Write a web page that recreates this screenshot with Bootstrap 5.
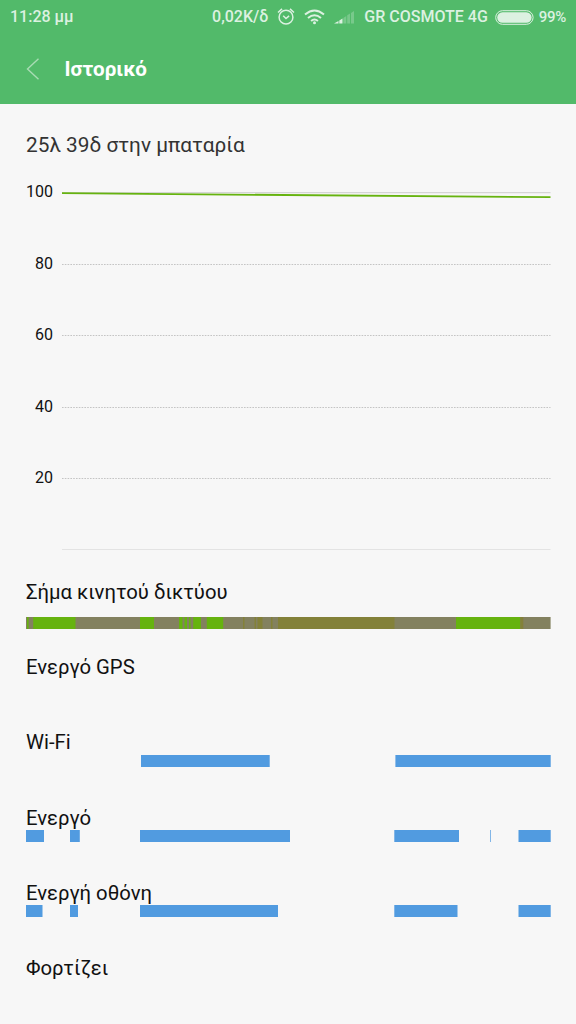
<!DOCTYPE html>
<html lang="el">
<head>
<meta charset="utf-8">
<meta name="viewport" content="width=device-width, initial-scale=1">
<title>Ιστορικό</title>
<link href="https://cdn.jsdelivr.net/npm/bootstrap@5.3.0/dist/css/bootstrap.min.css" rel="stylesheet">
<style>
body{font-family:Roboto,sans-serif;background:#f7f7f7;color:#111;overflow:hidden}
svg{display:block;flex:none}
.top-area{background:#52ba6a;height:104px}
.status{height:34px;padding:0 10px;color:#dcf1e1;font-size:16px;font-weight:500;line-height:34px;white-space:nowrap}
.status .percent{font-size:15px;margin-left:5px;letter-spacing:-.3px}
.title-bar{height:70px;padding-left:26px}
.title-bar h1{font-size:20.6px;font-weight:700;color:#fff;margin:0 0 0 24.500px;line-height:70px}
.content{padding:0 25px 0 26px}
.summary{font-size:20.8px;line-height:24px;margin:0;padding-top:29px;color:#333;white-space:nowrap}
.chart{height:391px;margin-top:10px}
.axis{width:27px;font-size:16px;line-height:20px;text-align:right;padding-top:15px;color:#111}
.axis span{display:block;height:71.500px}
.tracks{padding-top:22px}
.track{height:75.2px}
.track h2{font-size:20.3px;line-height:24px;font-weight:400;margin:0;color:#111;height:24.6px;white-space:nowrap}
.track .spaced{height:36.8px}
</style>
</head>
<body>
<header class="top-area">
  <div class="status d-flex align-items-center">
    <span>11:28 μμ</span>
    <span class="ms-auto">0,02K/δ</span>
    <svg width="18" height="18" viewBox="0 0 18 18" style="margin-left:9px" fill="none" stroke="#dcf1e1" stroke-width="1.500"><circle cx="9" cy="9.200" r="6.900"/><path d="M6.200 7.700 9 10.500l3.100-2.600M1 4.500 5 .9M17 4.500 13 .9"/></svg>
    <svg width="21" height="16" viewBox="0 0 21 16" style="margin-left:9px" fill="none" stroke="#dcf1e1" stroke-width="2"><path d="M1 5.500Q10.500-2.500 20 5.500M4 9Q10.500 3.500 17 9M7.100 12Q10.500 9 13.900 12"/><circle cx="10.500" cy="13.800" r="1.500" fill="#dcf1e1" stroke="none"/></svg>
    <svg width="21" height="14" viewBox="0 0 21 14" style="margin-left:9px"><path fill="#dcf1e1" d="M0 13.500 4.500 11V13.500zM5.300 10.500 8.500 8.500V13.500H5.300z"/><path fill="#78c98b" d="M9.300 8 12.300 6V13.500H9.300zM13.200 5.300 16 3.500V13.500H13.200zM17 3 20 1V13.500H17z"/></svg>
    <span style="margin-left:9px">GR COSMOTE 4G</span>
    <svg width="39" height="15" viewBox="0 0 39 15" style="margin-left:7px"><rect x=".7" y=".7" width="37.400" height="13.600" rx="6.800" fill="none" stroke="#dcf1e1" stroke-width="1"/><rect x="2.200" y="2.200" width="34.400" height="10.600" rx="5.300" fill="#dcf1e1"/></svg>
    <span class="percent">99%</span>
  </div>
  <div class="title-bar d-flex align-items-center">
    <svg width="14" height="22" viewBox="0 0 14 22" fill="none" stroke="#a8dcb4" stroke-width="1.400"><path d="M12.500 .8 1.500 11 12.500 21.200"/></svg>
    <h1>Ιστορικό</h1>
  </div>
</header>
<main class="content">
  <p class="summary">25λ 39δ στην μπαταρία</p>
  <section class="chart d-flex">
    <div class="axis"><span>100</span><span>80</span><span>60</span><span>40</span><span>20</span></div>
    <svg class="ms-auto" width="489" height="391" viewBox="62 167 489 391">
      <path d="M62 192.700H550.500" stroke="#d5d5d5" stroke-width="1.300"/>
      <path d="M62 264.500H550.500M62 335.500H550.500M62 407.500H550.500M62 478.500H550.500" stroke="#c4c4c4" stroke-dasharray="1.600 1.200"/>
      <path d="M62 549.500H550.500" stroke="#e3e3e3"/>
      <path d="M62 193.200 550.500 197.200" stroke="#66b30f" stroke-width="1.800"/>
    </svg>
  </section>
  <section class="tracks">
    <div class="track"><h2 class="spaced">Σήμα κινητού δικτύου</h2>
      <svg width="525" height="12" viewBox="26 0 525 12"><path fill="#83815f" d="M26 0H550.600V12H26z"/><path fill="#66b30f" d="M27 0h1.600v12h-1.600zM33.200 0H75.500V12H33.200zM140 0h14v12h-14zM179 0h3.500v12h-3.500zM184.500 0h2.500v12h-2.500zM189 0h1.500v12h-1.500zM193.200 0h7.800v12h-7.800zM206.800 0H223.200V12H206.800z"/><path fill="#66b30f" d="M456 0H520.300V12H456z"/><path fill="#838139" d="M243 0h1.500v12H243zM254.500 0h1.500v12h-1.500zM257.500 0h5v12h-5zM271 0h1.500v12H271zM278 0H394.500V12H278zM520.300 0h3v12h-3z"/></svg></div>
    <div class="track"><h2>Ενεργό GPS</h2></div>
    <div class="track"><h2>Wi-Fi</h2>
      <svg width="525" height="12" viewBox="26 0 525 12"><path fill="#519be0" d="M141 0H269.700V12H141zM395.400 0H550.700V12H395.400z"/></svg></div>
    <div class="track"><h2>Ενεργό</h2>
      <svg width="525" height="12" viewBox="26 0 525 12"><path fill="#519be0" d="M26 0H44V12H26zM70 0H79.800V12H70zM140 0H290V12H140zM394.300 0H459V12H394.300zM490.200 0h.7v12h-.7zM518.500 0H550.700V12H518.500z"/></svg></div>
    <div class="track"><h2>Ενεργή οθόνη</h2>
      <svg width="525" height="12" viewBox="26 0 525 12"><path fill="#519be0" d="M26 0H42.500V12H26zM70 0H78V12H70zM140 0H278V12H140zM394.300 0H457.500V12H394.300zM518.500 0H550.700V12H518.500z"/></svg></div>
    <div class="track"><h2>Φορτίζει</h2></div>
  </section>
</main>
<script src="https://cdn.jsdelivr.net/npm/bootstrap@5.3.0/dist/js/bootstrap.bundle.min.js"></script>
</body>
</html>
